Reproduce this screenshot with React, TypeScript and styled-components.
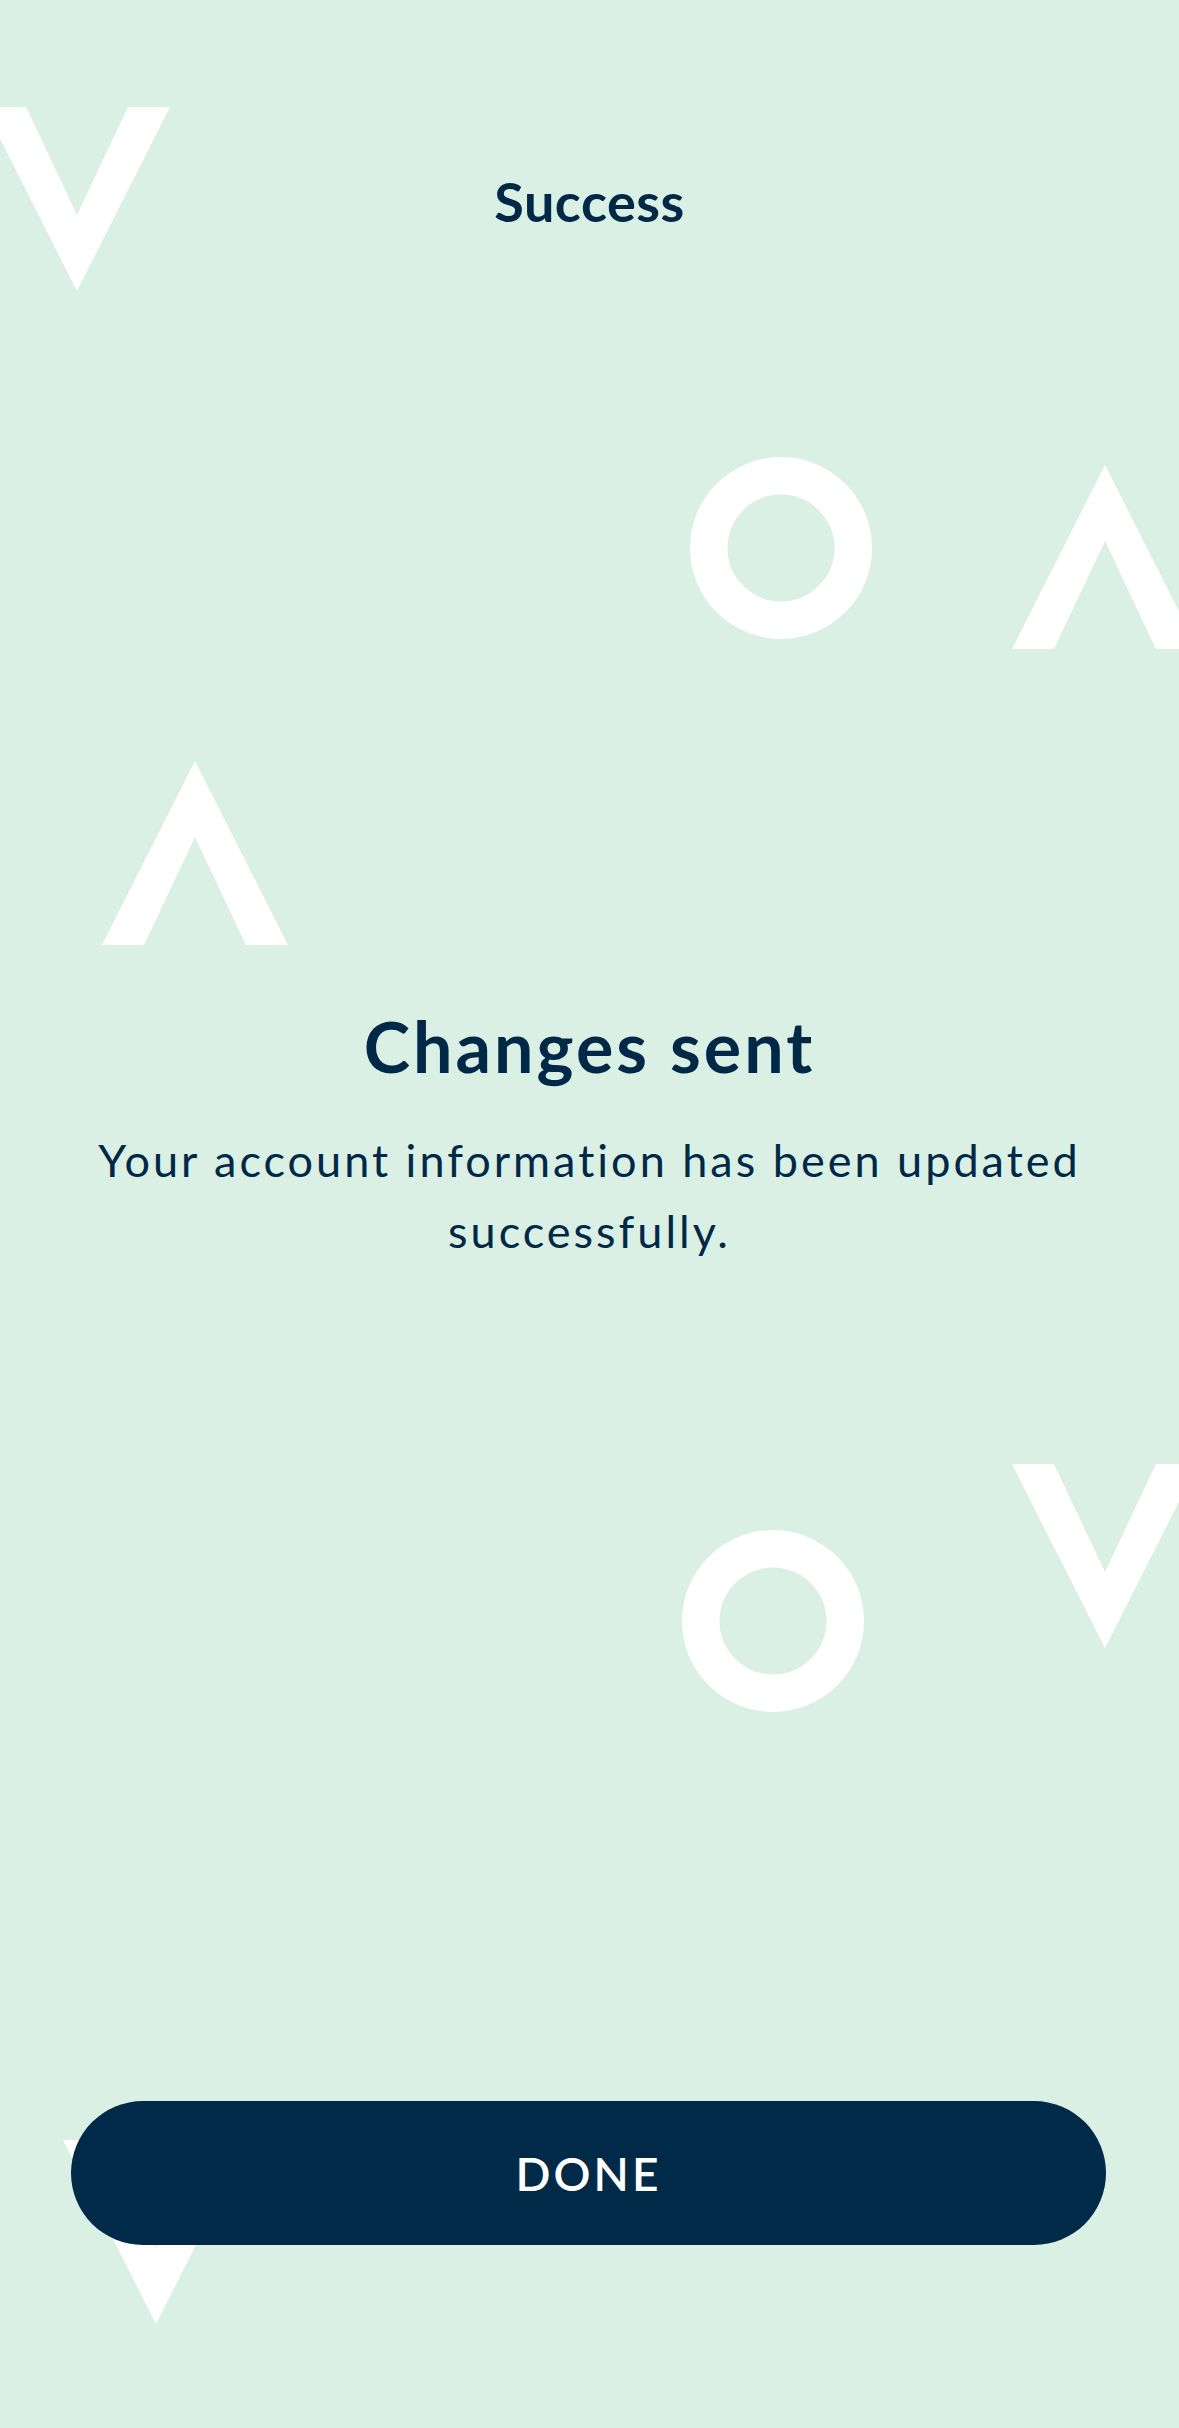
import React from "react";
import styled, { createGlobalStyle } from "styled-components";

const GlobalStyle = createGlobalStyle`
  html, body {
    margin: 0;
    padding: 0;
    background: #daf0e4;
  }
  * { box-sizing: border-box; }
`;

const NAVY = "#012847";

const Page = styled.div`
  position: relative;
  width: 100%;
  min-height: 2428px;
  overflow: hidden;
  background: #daf0e4;
  display: flex;
  flex-direction: column;
  font-family: Lato, "Open Sans", sans-serif;
  color: ${NAVY};
`;

const Header = styled.header`
  position: relative;
  z-index: 1;
  padding-top: 170px;
  display: flex;
  justify-content: center;
`;

const Title = styled.h1`
  margin: 0;
  font-size: 54px;
  line-height: 1.2;
  font-weight: 700;
  letter-spacing: 0.5px;
`;

const Main = styled.main`
  position: relative;
  z-index: 1;
  padding: 769px 80px 0;
  display: flex;
  flex-direction: column;
  align-items: center;
  text-align: center;
`;

const Heading = styled.h2`
  margin: 0;
  font-size: 70px;
  line-height: 1.2;
  font-weight: 700;
  letter-spacing: 3px;
`;

const Body = styled.p`
  margin: 37px 0 0;
  font-size: 45px;
  line-height: 71px;
  font-weight: 400;
  letter-spacing: 3px;
  max-width: 1010px;
`;

const Spacer = styled.div`
  flex: 1;
`;

const Footer = styled.footer`
  position: relative;
  z-index: 1;
  padding: 0 73px 183px 71px;
`;

const DoneButton = styled.button`
  width: 100%;
  height: 144px;
  border: none;
  border-radius: 72px;
  background: #002a48;
  color: #ffffff;
  font-family: Lato, "Open Sans", sans-serif;
  font-size: 46px;
  font-weight: 600;
  letter-spacing: 3px;
  cursor: pointer;
`;

const Deco = styled.svg<{ $x: number; $y: number }>`
  position: absolute;
  left: ${(p) => p.$x}px;
  top: ${(p) => p.$y}px;
  z-index: 0;
  overflow: visible;
`;

const V_PATH = "M0 0 H42 L93 108 L144 0 H186 L93 184 Z";
const A_PATH = "M0 184 H42 L93 76 L144 184 H186 L93 0 Z";

const Chevron = ({ x, y, up }: { x: number; y: number; up?: boolean }) => (
  <Deco $x={x} $y={y} width={186} height={184} viewBox="0 0 186 184">
    <path d={up ? A_PATH : V_PATH} fill="#ffffff" />
  </Deco>
);

const Ring = ({ x, y }: { x: number; y: number }) => (
  <Deco $x={x} $y={y} width={182} height={182} viewBox="0 0 182 182">
    <circle cx={91} cy={91} r={72.25} fill="none" stroke="#ffffff" strokeWidth={37.5} />
  </Deco>
);

export default function App() {
  return (
    <>
      <GlobalStyle />
      <Page>
        <Chevron x={-16} y={107} />
        <Ring x={690} y={457} />
        <Chevron x={1012} y={465} up />
        <Chevron x={102} y={761} up />
        <Ring x={682} y={1530} />
        <Chevron x={1012} y={1464} />
        <Chevron x={63} y={2140} />

        <Header>
          <Title>Success</Title>
        </Header>
        <Main>
          <Heading>Changes sent</Heading>
          <Body>Your account information has been updated successfully.</Body>
        </Main>
        <Spacer />
        <Footer>
          <DoneButton type="button">DONE</DoneButton>
        </Footer>
      </Page>
    </>
  );
}
